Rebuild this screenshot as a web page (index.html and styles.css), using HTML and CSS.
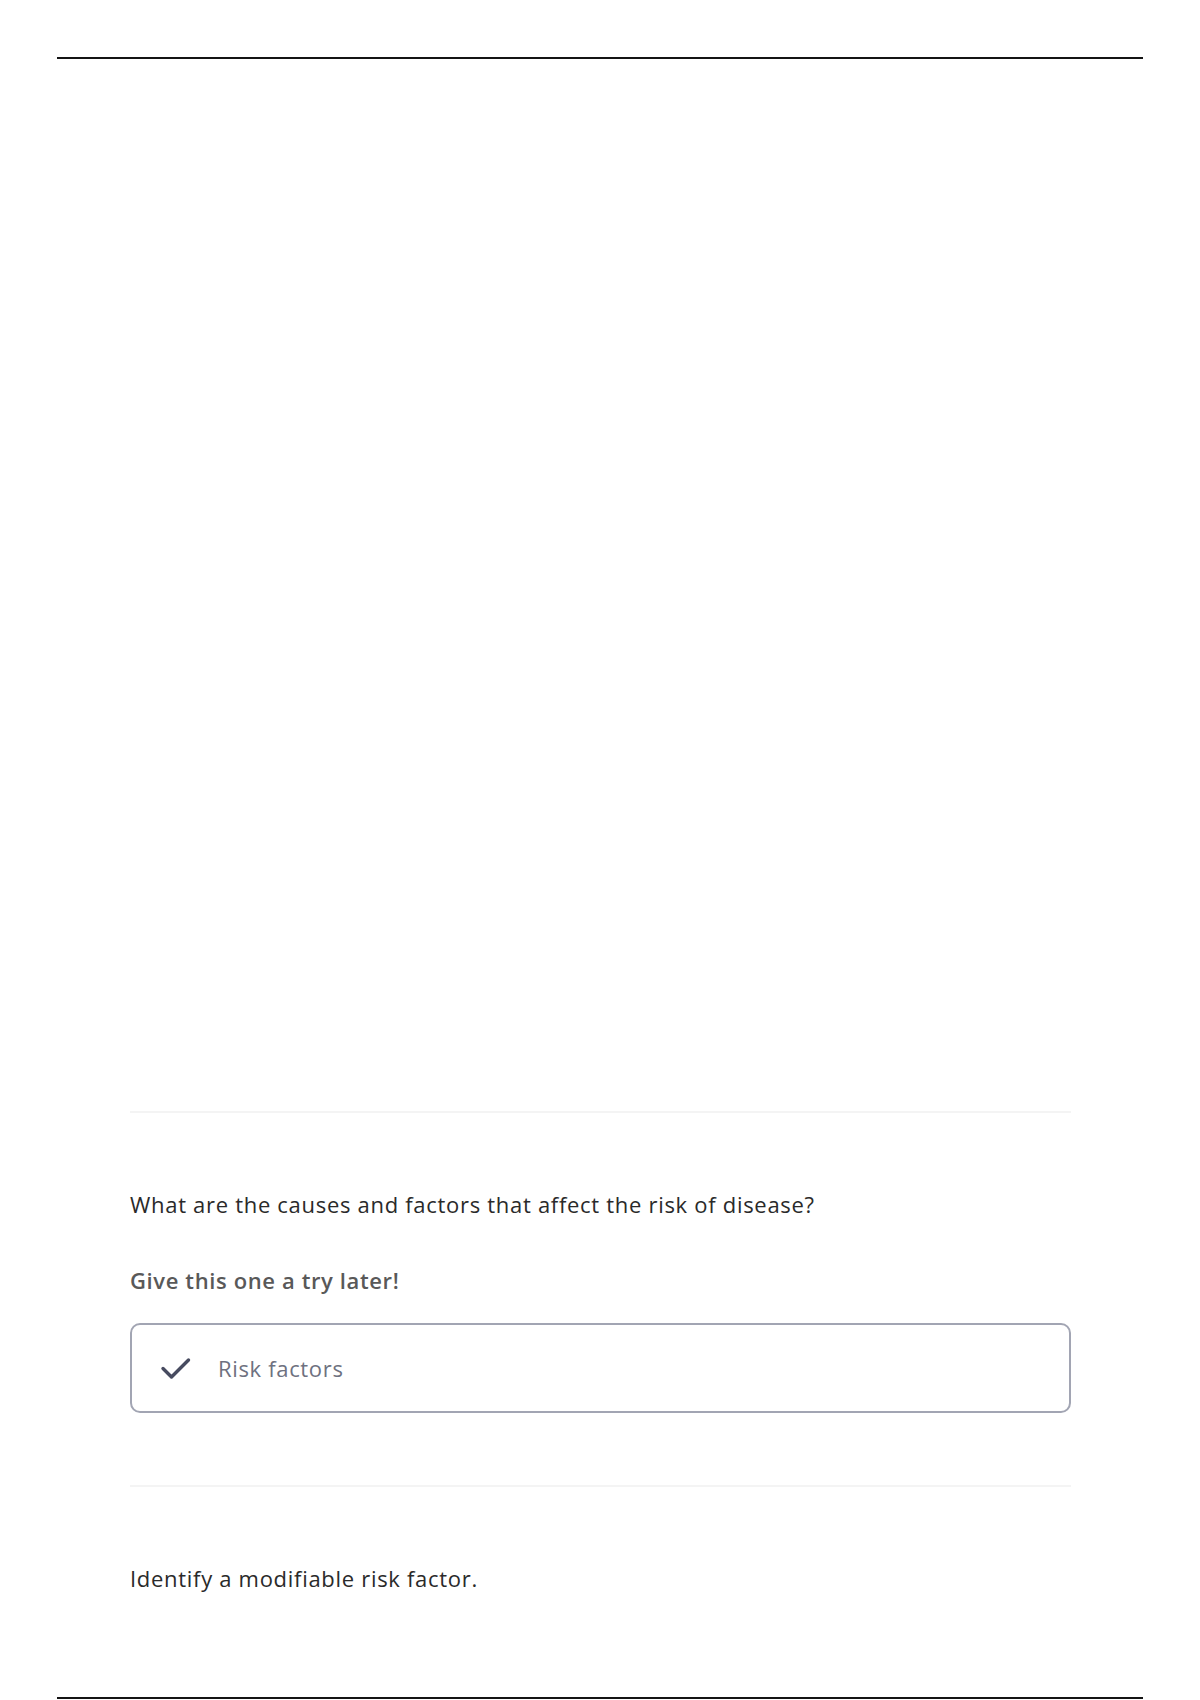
FILE: index.html
```html
<!DOCTYPE html>
<html lang="en">
<head>
<meta charset="utf-8">
<title>Flashcards</title>
<link rel="stylesheet" href="styles.css">
</head>
<body>
<div class="page">
  <hr class="page-rule">
  <div class="blank"></div>
  <section class="cards">
    <div class="card">
      <hr class="divider">
      <p class="question">What are the causes and factors that affect the risk of disease?</p>
      <p class="hint">Give this one a try later!</p>
      <div class="answer">
        <svg class="check" viewBox="0 0 32 32" width="32" height="32" aria-hidden="true">
          <path d="M3 16.5 L11.5 25 L28.5 8" fill="none" stroke="#474b60" stroke-width="3.4" stroke-linecap="round" stroke-linejoin="round"/>
        </svg>
        <span class="answer-text">Risk factors</span>
      </div>
    </div>
    <div class="card">
      <hr class="divider">
      <p class="question q2">Identify a modifiable risk factor.</p>
    </div>
  </section>
  <hr class="page-rule bottom">
</div>
</body>
</html>
```
FILE: styles.css
```css
html, body {
  margin: 0;
  padding: 0;
  background: #ffffff;
}
body {
  font-family: "Open Sans", Lato, "Liberation Sans", sans-serif;
  color: #2b2b2b;
}
.page {
  padding: 57px 57px 0;
  display: flex;
  flex-direction: column;
}
.page-rule {
  margin: 0;
  border: 0;
  height: 2px;
  background: #141414;
}
.blank {
  height: 1052px;
}
.cards {
  margin: 0 72px 0 73px;
  display: flex;
  flex-direction: column;
}
.divider {
  margin: 0;
  border: 0;
  height: 2px;
  background: #f4f4f4;
}
.question {
  margin: 76px 0 0;
  font-size: 22px;
  line-height: 30px;
  letter-spacing: 0.7px;
  color: #2a2a2a;
}
.hint {
  margin: 46px 0 0;
  font-size: 22px;
  line-height: 30px;
  letter-spacing: 0.62px;
  font-weight: 600;
  color: #595959;
}
.answer {
  margin-top: 28px;
  height: 86px;
  border: 2px solid #a2a5b3;
  border-radius: 10px;
  display: flex;
  align-items: center;
  padding-left: 28px;
  gap: 26px;
}
.check {
  flex: none;
}
.answer-text {
  font-size: 22px;
  letter-spacing: 0.66px;
  color: #6e7180;
}
.card + .card .divider {
  margin-top: 72px;
}
.q2 {
  margin-top: 76px;
}
.page-rule.bottom {
  margin-top: 104px;
}
```
